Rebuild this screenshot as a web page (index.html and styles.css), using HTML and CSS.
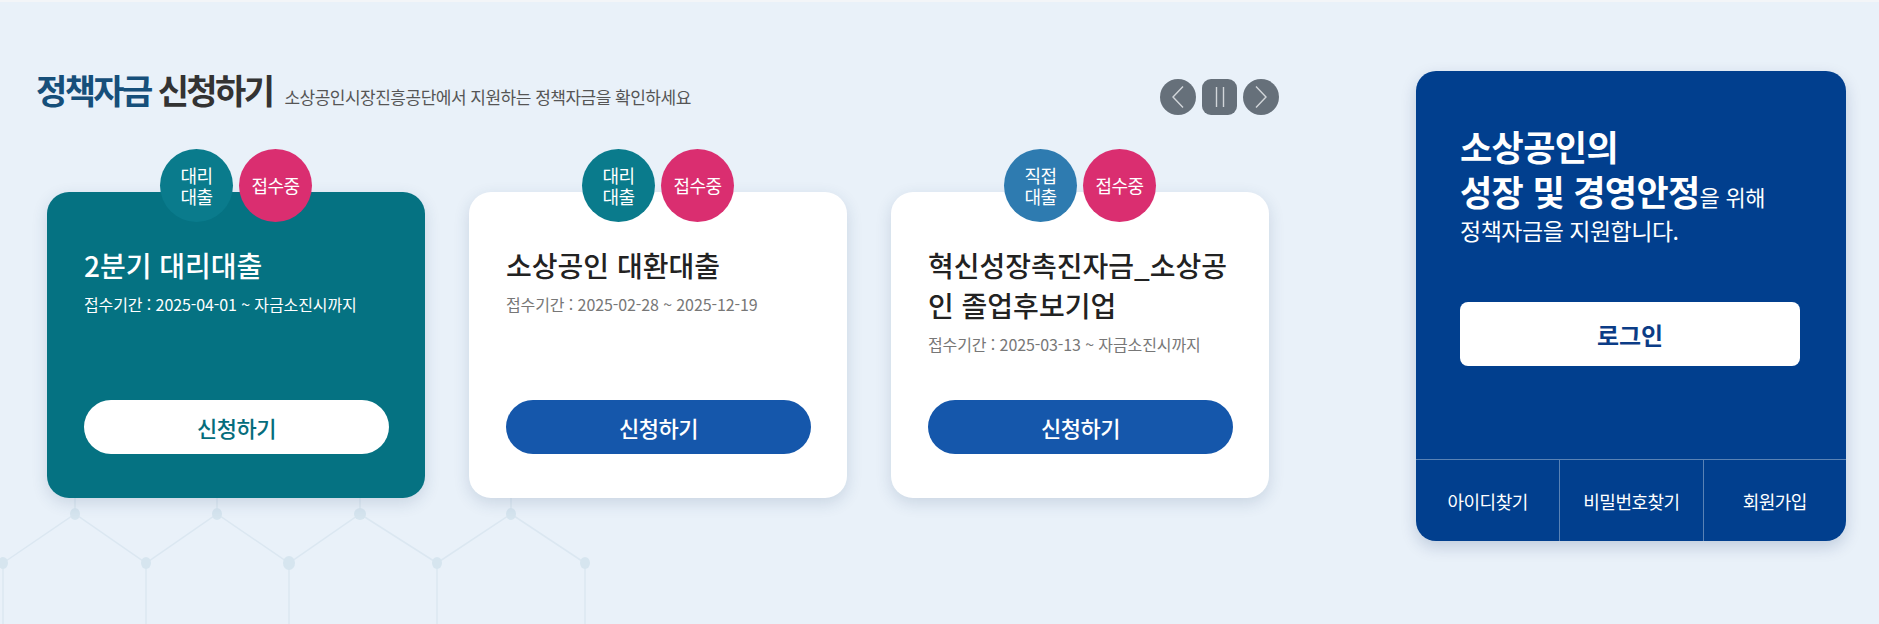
FILE: index.html
```html
<!DOCTYPE html>
<html lang="ko">
<head>
<meta charset="utf-8">
<title>정책자금 신청하기</title>
<link rel="stylesheet" href="styles.css">
</head>
<body>
<div class="page">
  <svg class="pattern" width="620" height="136" viewBox="0 0 620 136" aria-hidden="true">
    <g class="pattern-lines">
      <polyline points="3,73 75,24 146,73 217,24 289,73 360,24 437,73 511,24 585,73"/>
      <line x1="3" y1="73" x2="3" y2="136"/>
      <line x1="146" y1="73" x2="146" y2="136"/>
      <line x1="289" y1="73" x2="289" y2="136"/>
      <line x1="437" y1="73" x2="437" y2="136"/>
      <line x1="585" y1="73" x2="585" y2="136"/>
      <line x1="75" y1="24" x2="75" y2="0"/>
      <line x1="217" y1="24" x2="217" y2="0"/>
      <line x1="360" y1="24" x2="360" y2="0"/>
      <line x1="511" y1="24" x2="511" y2="0"/>
    </g>
    <g class="pattern-nodes">
      <ellipse cx="75" cy="24" rx="5" ry="6"/>
      <ellipse cx="217" cy="24" rx="5" ry="6"/>
      <ellipse cx="360" cy="24" rx="6" ry="6"/>
      <ellipse cx="511" cy="24" rx="5" ry="6"/>
      <ellipse cx="3" cy="73" rx="5" ry="6"/>
      <ellipse cx="146" cy="73" rx="5" ry="6"/>
      <ellipse cx="289" cy="73" rx="6" ry="7"/>
      <ellipse cx="437" cy="73" rx="5" ry="6"/>
      <ellipse cx="585" cy="73" rx="5" ry="6"/>
    </g>
  </svg>

  <section class="funds">
    <div class="funds-head">
      <h2 class="funds-title"><strong>정책자금</strong> 신청하기<span class="funds-sub">소상공인시장진흥공단에서 지원하는 정책자금을 확인하세요</span></h2>
      <div class="controls">
        <button class="ctrl" type="button" aria-label="이전">
          <svg width="14" height="24" viewBox="0 0 14 24"><polyline points="12,1.5 2,12 12,22.5"/></svg>
        </button>
        <button class="ctrl ctrl-pause" type="button" aria-label="정지">
          <svg width="14" height="22" viewBox="0 0 14 22"><line x1="3.5" y1="1" x2="3.5" y2="21"/><line x1="10.5" y1="1" x2="10.5" y2="21"/></svg>
        </button>
        <button class="ctrl" type="button" aria-label="다음">
          <svg width="14" height="24" viewBox="0 0 14 24"><polyline points="2,1.5 12,12 2,22.5"/></svg>
        </button>
      </div>
    </div>

    <div class="cards">
      <article class="card card-active">
        <div class="badges"><span class="badge badge-agent"><span class="badge-line">대리</span><span class="badge-line">대출</span></span><span class="badge badge-open">접수중</span></div>
        <h3 class="card-title">2분기 대리대출</h3>
        <p class="card-date">접수기간 : 2025-04-01 ~ 자금소진시까지</p>
        <a class="card-btn" href="#">신청하기</a>
      </article>
      <article class="card">
        <div class="badges"><span class="badge badge-agent"><span class="badge-line">대리</span><span class="badge-line">대출</span></span><span class="badge badge-open">접수중</span></div>
        <h3 class="card-title">소상공인 대환대출</h3>
        <p class="card-date">접수기간 : 2025-02-28 ~ 2025-12-19</p>
        <a class="card-btn" href="#">신청하기</a>
      </article>
      <article class="card">
        <div class="badges"><span class="badge badge-direct"><span class="badge-line">직접</span><span class="badge-line">대출</span></span><span class="badge badge-open">접수중</span></div>
        <h3 class="card-title">혁신성장촉진자금_소상공인 졸업후보기업</h3>
        <p class="card-date">접수기간 : 2025-03-13 ~ 자금소진시까지</p>
        <a class="card-btn" href="#">신청하기</a>
      </article>
    </div>
  </section>

  <aside class="login-panel">
    <div class="panel-body">
      <h3 class="panel-title">소상공인의<br>성장 및 경영안정<span class="panel-title-sm">을 위해</span></h3>
      <p class="panel-text">정책자금을 지원합니다.</p>
      <a class="login-btn" href="#">로그인</a>
    </div>
    <nav class="panel-links">
      <a class="panel-link" href="#">아이디찾기</a>
      <a class="panel-link" href="#">비밀번호찾기</a>
      <a class="panel-link" href="#">회원가입</a>
    </nav>
  </aside>
</div>
</body>
</html>
```

FILE: styles.css
```css
* { box-sizing: border-box; }

body {
  margin: 0;
  background: #e9f1f9;
  font-family: "Noto Sans CJK KR", "Noto Sans", sans-serif;
}

a { text-decoration: none; color: inherit; }

.page {
  position: relative;
  display: flex;
  align-items: flex-start;
  height: 624px;
  padding: 69px 0 0 36px;
  border-top: 2px solid #f3f5f8;
  overflow: hidden;
}

.pattern {
  position: absolute;
  left: 0;
  top: 488px;
  z-index: 0;
}
.pattern-lines polyline,
.pattern-lines line {
  fill: none;
  stroke: #dbe7f1;
  stroke-width: 1.5;
}
.pattern-nodes ellipse { fill: #d6e5ef; }

.funds {
  position: relative;
  z-index: 1;
  width: 1243px;
}

.funds-head {
  display: flex;
  justify-content: space-between;
  align-items: center;
  height: 44px;
}

.funds-title {
  margin: 0;
  font-size: 34px;
  font-weight: 700;
  line-height: 44px;
  letter-spacing: -2.6px;
  color: #333333;
  white-space: nowrap;
}
.funds-title strong { color: #164f7a; font-weight: 700; }

.funds-sub {
  margin-left: 12px;
  font-size: 17px;
  font-weight: 400;
  letter-spacing: -0.5px;
  color: #555555;
}

.controls {
  display: flex;
  gap: 6px;
  margin-top: 8px;
}

.ctrl {
  width: 36px;
  height: 36px;
  padding: 0;
  border: 0;
  border-radius: 50%;
  background: #66707a;
  display: flex;
  align-items: center;
  justify-content: center;
}
.ctrl-pause { width: 35px; border-radius: 9px; }
.ctrl svg polyline,
.ctrl svg line {
  fill: none;
  stroke: #d2d6da;
  stroke-width: 1.4;
}

.cards {
  display: flex;
  gap: 44px;
  margin-top: 77px;
  padding-left: 11px;
}

.card {
  position: relative;
  display: flex;
  flex-direction: column;
  width: 378px;
  height: 306px;
  padding: 53px 36px 44px 37px;
  border-radius: 22px;
  background: #ffffff;
  box-shadow: 0 5px 16px rgba(40, 70, 110, 0.16);
}

.card-active { background: #057282; }

.badges {
  position: absolute;
  top: -43px;
  left: 0;
  right: 0;
  display: flex;
  justify-content: center;
  gap: 6px;
}

.badge {
  width: 73px;
  height: 73px;
  border-radius: 50%;
  display: flex;
  flex-direction: column;
  align-items: center;
  justify-content: center;
  text-align: center;
  color: #ffffff;
  font-size: 18px;
  line-height: 21px;
  letter-spacing: -0.6px;
}
.badge-line { display: block; }
.badge-agent { background: #0a7b8c; }
.badge-direct { background: #2e7bb0; }
.badge-open { background: #da2e70; }

.card-title {
  margin: 0;
  font-size: 28px;
  font-weight: 500;
  line-height: 40px;
  letter-spacing: 0;
  color: #222222;
}

.card-date {
  margin: 7px 0 0;
  font-size: 16px;
  line-height: 24px;
  letter-spacing: -0.1px;
  color: #777777;
}

.card-btn {
  margin-top: auto;
  height: 54px;
  border-radius: 27px;
  background: #1557ab;
  color: #ffffff;
  display: flex;
  align-items: center;
  justify-content: center;
  font-size: 22px;
  font-weight: 500;
  letter-spacing: -0.5px;
}

.card-active .card-title,
.card-active .card-date { color: #ffffff; }
.card-active .card-btn { background: #ffffff; color: #056d7c; }

.login-panel {
  position: relative;
  z-index: 1;
  display: flex;
  flex-direction: column;
  width: 430px;
  height: 470px;
  margin-left: 137px;
  border-radius: 20px;
  background: #013f8e;
  color: #ffffff;
  overflow: hidden;
  box-shadow: 0 6px 16px rgba(0, 40, 100, 0.18);
}

.panel-body { padding: 52px 44px 0; }

.panel-title {
  margin: 0;
  font-size: 35px;
  font-weight: 700;
  line-height: 45px;
  letter-spacing: -0.6px;
}
.panel-title-sm {
  font-size: 22px;
  font-weight: 400;
  letter-spacing: -0.3px;
}

.panel-text {
  margin: -4px 0 0;
  font-size: 23px;
  line-height: 30px;
  letter-spacing: -0.5px;
}

.login-btn {
  margin-top: 57px;
  display: flex;
  align-items: center;
  justify-content: center;
  width: 340px;
  height: 64px;
  border-radius: 8px;
  background: #ffffff;
  color: #0b3c86;
  font-size: 24px;
  font-weight: 700;
  letter-spacing: 0;
}

.panel-links {
  margin-top: auto;
  display: grid;
  grid-template-columns: repeat(3, 1fr);
  height: 82px;
  border-top: 1px solid rgba(255, 255, 255, 0.35);
}

.panel-link {
  display: flex;
  align-items: center;
  justify-content: center;
  font-size: 18px;
  letter-spacing: -0.5px;
}
.panel-link + .panel-link { border-left: 1px solid rgba(255, 255, 255, 0.35); }
```
